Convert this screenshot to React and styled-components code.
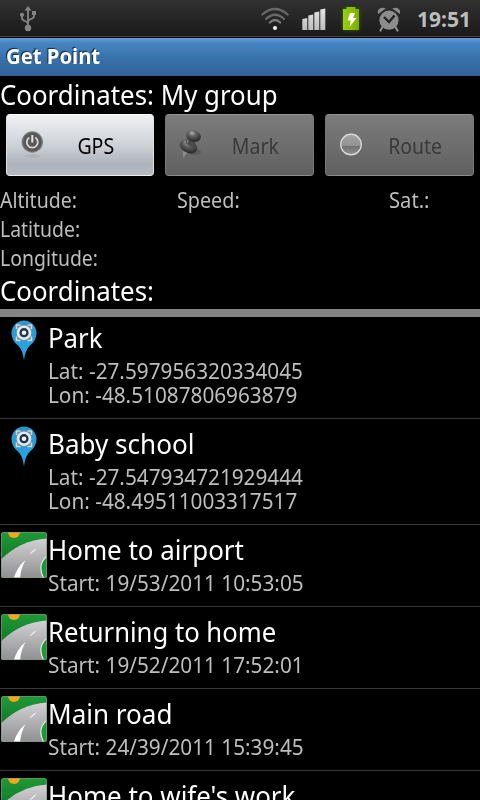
import React from "react";
import styled, { createGlobalStyle } from "styled-components";

const GlobalStyle = createGlobalStyle`
  * {
    box-sizing: border-box;
  }

  body {
    margin: 0;
    background: #000;
    overflow: hidden;
  }

  svg {
    display: block;
    flex: none;
  }
`;

const Screen = styled.div`
  width: 480px;
  height: 800px;
  overflow: hidden;

  display: flex;
  flex-direction: column;

  background: #000;
  color: #fff;
  font-family: "Noto Sans", "Open Sans", sans-serif;
`;

const StatusBar = styled.div`
  flex: none;
  height: 38px;
  padding: 0 10px 0 16px;

  display: flex;
  align-items: center;
  justify-content: space-between;

  background: linear-gradient(
    #313131,
    #1a1a1a 36px,
    #4a4038 36px,
    #4a4038 37px,
    #000 37px
  );
`;

const StatusIcons = styled.div`
  height: 38px;
  display: flex;
  align-items: center;
`;

const IconSlot = styled.div`
  width: ${({ $width }) => $width}px;
`;

const Text = styled.span`
  display: inline-block;
  white-space: pre;
  transform: scaleX(${({ $stretch }) => $stretch || 1});
  transform-origin: ${({ $origin }) => $origin || "left"};
`;

const Clock = styled.div`
  width: 53px;
  margin-left: 15px;
  color: #bdbdbd;
  font-size: 21px;
  font-weight: 700;
  line-height: 38px;
`;

const TitleBar = styled.div`
  flex: none;
  height: 38px;
  padding-left: 6px;

  background: linear-gradient(#5f9ddb, #4685c2 5px, #3a74ae 18px, #2f6298);
  font-size: 21px;
  font-weight: 700;
  line-height: 37px;
  text-shadow: -1px -1px 1px #10253d;
`;

const Heading = styled.div`
  flex: none;
  height: 38px;
  font-size: 27px;
  line-height: 38px;
`;

const Buttons = styled.div`
  flex: none;
  height: 72px;
  padding: 0 6px;

  display: grid;
  grid-template-columns: 148px 149px 149px;
  column-gap: 11px;
`;

const Button = styled.button`
  height: 62px;
  padding: 1px 8px 0 12px;

  display: flex;
  align-items: center;

  border: 1px solid;
  border-color: #929292 #777 #8c8c8c;
  border-radius: 4px;
  background: linear-gradient(#7b7c7b, #606060);
  color: #3a3a3a;
  font-family: inherit;
  font-size: 21px;

  &[data-enabled="true"] {
    border-color: #fff #dfe1e4 #eceef0;
    background: linear-gradient(#f0f1f3, #ced2d7 50%, #adb3bb 82%, #b6bbc2);
    color: #000;
  }
`;

const ButtonLabel = styled.div`
  flex: 1;
  text-align: center;
`;

const Details = styled.div`
  flex: none;
  height: 87px;

  display: grid;
  grid-template-columns: 177px 212px 1fr;
  grid-auto-rows: 29px;

  color: #bebebe;
  font-size: 21px;
  line-height: 29px;
`;

const FullRow = styled.div`
  grid-column: 1 / -1;
`;

const ListHeading = styled.div`
  flex: none;
  height: 36px;
  font-size: 27px;
  line-height: 36px;
`;

const List = styled.div`
  flex: 1;
  min-height: 0;
  overflow: hidden;
  border-top: 8px solid #848484;
`;

const Row = styled.div`
  height: ${({ $lines }) => ($lines === 2 ? 106 : 82)}px;
  display: flex;
  border-bottom: 1px solid #3a3a3a;

  &:first-child {
    margin-top: -4px;
  }
`;

const RowIcon = styled.div`
  width: 48px;
  padding-top: 6px;
`;

const RowBody = styled.div`
  padding-top: 9px;
`;

const RowTitle = styled.div`
  height: 37px;
  font-size: 27px;
  line-height: 32px;
`;

const RowLine = styled.div`
  color: #bebebe;
  font-size: 21px;
  line-height: 24px;
`;

const UsbIcon = () => (
  <svg width="24" height="28" viewBox="0 0 24 28" fill="none" stroke="#858585" strokeWidth="1.8">
    <path d="M12 24V4M12 19c0-4-6-2-6-6v-3M12 17c0-4 6-2 6-6V9" />
    <path d="M12 1l3.5 4.5h-7z" fill="#858585" stroke="none" />
    <circle cx="12" cy="23" r="3.2" fill="#858585" stroke="none" />
    <circle cx="6" cy="9.8" r="2.1" fill="#858585" stroke="none" />
    <path d="M16 6h4v4h-4z" fill="#858585" stroke="none" />
  </svg>
);

const WifiIcon = () => (
  <svg width="30" height="26" viewBox="0 0 30 26" fill="none" strokeLinecap="round" strokeWidth="2.2">
    <path d="M2.3 8.500Q15-2.500 27.700 8.500" stroke="#686868" />
    <path d="M6 13Q15 4.500 24 13" stroke="#686868" />
    <path d="M9.800 16.500Q15 11.500 20.200 16.500" stroke="#7c7c7c" />
    <circle cx="15" cy="22" r="2.1" fill="#f0f0f0" />
  </svg>
);

const SignalIcon = () => (
  <svg width="24" height="24" viewBox="0 0 24 24">
    <defs>
      <linearGradient id="signal" x2="0" y2="1">
        <stop stopColor="#e6e6e6" />
        <stop offset="1" stopColor="#bcbcbc" />
      </linearGradient>
    </defs>
    <path
      d="M0.300 12l5-1v12h-5zM6.300 8.500l5-1V23h-5zM12.300 5.500l5-1V23h-5zM18.300 2.500l5-1V23h-5z"
      fill="url(#signal)"
    />
  </svg>
);

const BatteryIcon = () => (
  <svg width="26" height="34" viewBox="0 0 26 34">
    <defs>
      <linearGradient id="battery">
        <stop stopColor="#96d40b" />
        <stop offset="1" stopColor="#7aad00" />
      </linearGradient>
      <filter id="glow" x="-50%" y="-50%" width="200%" height="200%">
        <feGaussianBlur stdDeviation="2" />
      </filter>
    </defs>
    <path d="M5 7h16v21H5z" fill="#4d7a08" opacity=".7" filter="url(#glow)" />
    <path d="M5 7h3.500V5h9v2H21v21H5z" fill="url(#battery)" />
    <path d="M12 11h5l-2 5h3.500L11.500 25l1.200-6.500H9.500z" fill="#fff" />
  </svg>
);

const AlarmIcon = () => (
  <svg width="26" height="28" viewBox="0 0 26 28" fill="#8d8d8d">
    <circle cx="13" cy="15.2" r="9.6" />
    <path d="M2.2 9C.5 4 5.5 1.5 9.7 3.5zM23.8 9C25.5 4 20.5 1.5 16.3 3.5z" />
    <path d="M6.5 22l-2 3.500M19.500 22l2 3.500" stroke="#8d8d8d" strokeWidth="2.2" strokeLinecap="round" />
    <path d="M8 12l5 5 5.500-6.500" fill="none" stroke="#242424" strokeWidth="2.4" />
  </svg>
);

const PowerIcon = () => (
  <svg width="28" height="36" viewBox="0 0 28 36">
    <ellipse cx="13.300" cy="28" rx="8" ry="1.8" fill="#9b9fa4" opacity=".4" />
    <circle cx="13.300" cy="14" r="10.7" fill="#7b7b7b" />
    <circle cx="13.300" cy="14" r="9.400" fill="#585858" />
    <path d="M10.300 9.500a5.500 5.500 0 1 0 6 0" fill="none" stroke="#d6d8da" strokeWidth="1.8" />
    <path d="M13.300 7v7.500" stroke="#e5e6e8" strokeWidth="2" />
  </svg>
);

const MarkIcon = () => (
  <svg width="28" height="36" viewBox="0 0 28 36">
    <defs>
      <radialGradient id="mark" cx=".35" cy=".3" r=".7">
        <stop stopColor="#b4b4b4" />
        <stop offset=".35" stopColor="#646464" />
        <stop offset="1" stopColor="#2c2c2c" />
      </radialGradient>
    </defs>
    <ellipse cx="16" cy="24" rx="7" ry="3" fill="#4c4c4c" opacity=".5" />
    <path d="M4.500 23l1 7 4-6z" fill="#8c8c8c" />
    <ellipse cx="10.500" cy="18.500" rx="9.200" ry="6.300" fill="url(#mark)" transform="rotate(28 10.500 18.500)" />
    <path d="M9.500 9l8 4.500-1.500 6.500-8.500-4.500z" fill="#4a4a4a" />
    <path d="M10.500 11l-1.500 4.500" stroke="#8e8e8e" />
    <ellipse cx="15.500" cy="8" rx="7.500" ry="5.600" fill="url(#mark)" transform="rotate(18 15.500 8)" />
  </svg>
);

const RouteIcon = () => (
  <svg width="28" height="36" viewBox="0 0 28 36">
    <defs>
      <linearGradient id="route" x2="0" y2="1">
        <stop stopColor="#a5a5a5" />
        <stop offset=".56" stopColor="#929292" />
        <stop offset=".57" stopColor="#707070" />
        <stop offset="1" stopColor="#929292" />
      </linearGradient>
    </defs>
    <circle cx="13" cy="16.5" r="10.3" fill="url(#route)" stroke="#dedede" strokeWidth="1.2" />
  </svg>
);

const PinIcon = () => (
  <svg width="48" height="44" viewBox="0 0 48 44">
    <defs>
      <linearGradient id="pin" x2="0" y2="1">
        <stop stopColor="#2d95c6" />
        <stop offset="1" stopColor="#24aaf0" />
      </linearGradient>
    </defs>
    <path
      d="M24 42c-.8-8-2.500-12-6.500-16C13.500 23 11.500 18.500 11.500 14a12.500 12.500 0 0 1 25 0c0 4.500-2 9-6 12-4 4-5.700 8-6.500 16z"
      fill="url(#pin)"
    />
    <path d="M16.500 6h15v15.500h-15z" fill="#6f8d9e" />
    <path d="M16.500 10V6h4M27.500 6h4v4M31.500 17.500v4h-4M20.500 21.500h-4v-4" fill="none" stroke="#c9d8df" strokeWidth="1.500" />
    <circle cx="24" cy="13.700" r="7.300" fill="#e3e8ea" />
    <circle cx="24" cy="13.700" r="4.600" fill="#20344c" />
    <circle cx="24" cy="13.700" r="2.300" fill="#eef2f4" />
  </svg>
);

const RoadIcon = () => (
  <svg width="48" height="48" viewBox="0 0 48 48">
    <defs>
      <linearGradient id="grass" x2="0" y2="1">
        <stop stopColor="#219a38" />
        <stop offset=".5" stopColor="#128029" />
        <stop offset="1" stopColor="#2fa843" />
      </linearGradient>
      <linearGradient id="road" x2="0" y2="1">
        <stop stopColor="#d2d2d5" />
        <stop offset="1" stopColor="#8e8e91" />
      </linearGradient>
      <clipPath id="tile">
        <rect x="1" y="1" width="46" height="46" rx="2.5" />
      </clipPath>
    </defs>
    <g clipPath="url(#tile)">
      <path d="M0 0h48v48H0z" fill="url(#grass)" />
      <circle cx="14" cy="1" r="6" fill="#f3a51d" />
      <path d="M0 29.500Q20 9 48 7.500V48H0z" fill="url(#road)" />
      <path d="M48 24.500Q36 33 44 48H48z" fill="#1f9638" />
      <path d="M48 24.500Q36 33 44 48" fill="none" stroke="#e2efe2" strokeWidth="1.2" />
      <path d="M13.500 48Q17 36 25.500 29Q20.500 38 20 48z" fill="#fff" />
      <path d="M29.500 22.500Q32 19 37 17Q35 20.500 30.500 23z" fill="#ececee" />
    </g>
    <rect x="1.5" y="1.5" width="45" height="45" rx="2.5" fill="none" stroke="#7d9a80" opacity=".6" />
  </svg>
);

const rows = [
  {
    title: "Park",
    stretch: 0.955,
    lines: ["Lat: -27.597956320334045", "Lon: -48.51087806963879"],
  },
  {
    title: "Baby school",
    stretch: 0.965,
    lines: ["Lat: -27.547934721929444", "Lon: -48.49511003317517"],
  },
  { title: "Home to airport", stretch: 0.96, lines: ["Start: 19/53/2011 10:53:05"] },
  { title: "Returning to home", stretch: 0.95, lines: ["Start: 19/52/2011 17:52:01"] },
  { title: "Main road", stretch: 0.965, lines: ["Start: 24/39/2011 15:39:45"] },
  { title: "Home to wife's work", stretch: 0.96, lines: [] },
];

const App = () => (
  <>
    <GlobalStyle />
    <Screen>
      <StatusBar>
        <UsbIcon />
        <StatusIcons>
          <IconSlot $width={42}>
            <WifiIcon />
          </IconSlot>
          <IconSlot $width={36}>
            <SignalIcon />
          </IconSlot>
          <IconSlot $width={38}>
            <BatteryIcon />
          </IconSlot>
          <IconSlot $width={26}>
            <AlarmIcon />
          </IconSlot>
          <Clock>19:51</Clock>
        </StatusIcons>
      </StatusBar>
      <TitleBar>
        <Text $stretch={0.965}>Get Point</Text>
      </TitleBar>
      <Heading>
        <Text $stretch={0.957}>Coordinates: My group</Text>
      </Heading>
      <Buttons>
        <Button data-enabled="true">
          <PowerIcon />
          <ButtonLabel>
            <Text $stretch={0.93} $origin="center">
              GPS
            </Text>
          </ButtonLabel>
        </Button>
        <Button>
          <MarkIcon />
          <ButtonLabel>
            <Text $stretch={0.93} $origin="center">
              Mark
            </Text>
          </ButtonLabel>
        </Button>
        <Button>
          <RouteIcon />
          <ButtonLabel>
            <Text $stretch={0.925} $origin="center">
              Route
            </Text>
          </ButtonLabel>
        </Button>
      </Buttons>
      <Details>
        <Text $stretch={0.93}>Altitude:</Text>
        <Text $stretch={0.94}>Speed:</Text>
        <Text $stretch={0.96}>Sat.:</Text>
        <FullRow>
          <Text $stretch={0.925}>Latitude:</Text>
        </FullRow>
        <FullRow>
          <Text $stretch={0.925}>Longitude:</Text>
        </FullRow>
      </Details>
      <ListHeading>
        <Text $stretch={0.957}>Coordinates:</Text>
      </ListHeading>
      <List>
        {rows.map(({ title, stretch, lines }) => (
          <Row key={title} $lines={lines.length}>
            <RowIcon>{lines.length === 2 ? <PinIcon /> : <RoadIcon />}</RowIcon>
            <RowBody>
              <RowTitle>
                <Text $stretch={stretch}>{title}</Text>
              </RowTitle>
              {lines.map((line) => (
                <RowLine key={line}>
                  <Text $stretch={0.988}>{line}</Text>
                </RowLine>
              ))}
            </RowBody>
          </Row>
        ))}
      </List>
    </Screen>
  </>
);

export default App;
